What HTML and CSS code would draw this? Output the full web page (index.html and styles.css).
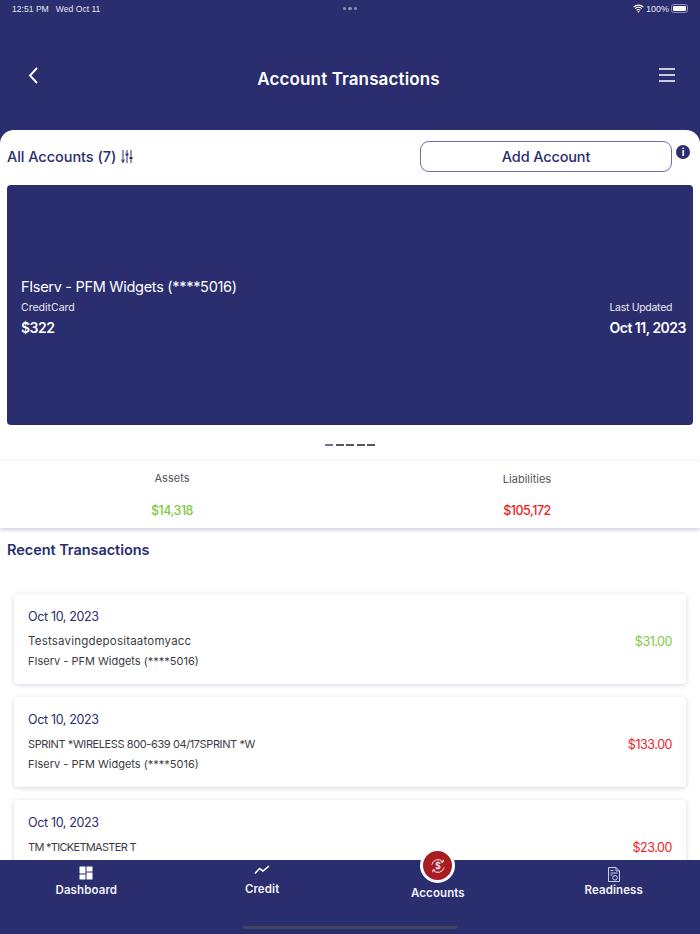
FILE: index.html
```html
<!DOCTYPE html>
<html lang="en">
<head>
<meta charset="utf-8">
<title>Account Transactions</title>
<link rel="stylesheet" href="styles.css">
</head>
<body>
<div class="app">
  <header class="top">
    <div class="status">
      <div class="status-left"><span>12:51 PM</span><span>Wed Oct 11</span></div>
      <div class="dots"><i></i><i></i><i></i></div>
      <div class="status-right">
        <svg class="wifi" width="11" height="9" viewBox="0 0 12 10"><path d="M.6 3.4a7.8 7.8 0 0 1 10.8 0M2.3 5.2a5.4 5.4 0 0 1 7.4 0M4 7a3 3 0 0 1 4 0" fill="none" stroke="#fff" stroke-width="1.3"/><path d="M6 9.7 4.700 8.300a2 2 0 0 1 2.600 0z" fill="#fff"/></svg>
        <span>100%</span>
        <span class="battery"><span class="battery-fill"></span></span>
      </div>
    </div>
    <div class="titlebar">
      <svg class="back" width="12" height="18" viewBox="0 0 12 18"><path d="M10 2 3 9.500 10 17" fill="none" stroke="#fff" stroke-width="1.900"/></svg>
      <h1>Account Transactions</h1>
      <svg class="menu" width="16" height="14" viewBox="0 0 16 14"><path d="M0 1h16M0 7h16M0 13h16" stroke="#fff" stroke-width="1.300"/></svg>
    </div>
  </header>
  <main class="sheet">
    <div class="acct-row">
      <div class="acct-label">All Accounts (7)
        <svg width="12" height="13" viewBox="0 0 12 13" fill="none" stroke="#2a2d6e"><path d="M2 0v12M6 0v13M10 0v13" stroke-width="1"/><path d="M.5 9.500 2 12.500l1.500-3" stroke-width="1"/><path d="M4.500 4.500h3M8.500 8h3" stroke-width="1.800"/></svg>
      </div>
      <div class="add-wrap">
        <button class="add-btn">Add Account</button>
        <span class="info">i</span>
      </div>
    </div>
    <section class="card">
      <div class="card-title">FIserv - PFM Widgets (****5016)</div>
      <div class="card-cols">
        <div><div class="card-small">CreditCard</div><div class="card-val">$322</div></div>
        <div><div class="card-small updated">Last Updated</div><div class="card-val">Oct 11, 2023</div></div>
      </div>
    </section>
    <div class="pager"><i class="on"></i><i></i><i></i><i></i><i></i></div>
    <section class="totals">
      <div class="total"><div class="total-label">Assets</div><div class="total-val green">$14,318</div></div>
      <div class="total"><div class="total-label">Liabilities</div><div class="total-val red">$105,172</div></div>
    </section>
    <h2>Recent Transactions</h2>
    <div class="tx-list">
      <article class="tx">
        <div class="tx-date">Oct 10, 2023</div>
        <div class="tx-line"><span class="name-mixed">Testsavingdepositaatomyacc</span><span class="tx-amt green">$31.00</span></div>
        <div class="tx-sub">FIserv - PFM Widgets (****5016)</div>
      </article>
      <article class="tx">
        <div class="tx-date">Oct 10, 2023</div>
        <div class="tx-line"><span class="name-caps">SPRINT *WIRELESS 800-639 04/17SPRINT *W</span><span class="tx-amt red">$133.00</span></div>
        <div class="tx-sub">FIserv - PFM Widgets (****5016)</div>
      </article>
      <article class="tx">
        <div class="tx-date">Oct 10, 2023</div>
        <div class="tx-line"><span class="name-caps-tight">TM *TICKETMASTER T</span><span class="tx-amt red">$23.00</span></div>
      </article>
    </div>
  </main>
  <nav class="tabs">
    <div class="tab">
      <svg width="14" height="14" viewBox="0 0 14 14" fill="#fff"><path d="M.5.500h6v7h-6zM7.500.500h6v5h-6zM.5 8.500h6v5h-6zM7.500 6.500h6v7h-6z"/></svg>
      <span>Dashboard</span>
    </div>
    <div class="tab tab-credit">
      <svg width="16" height="10" viewBox="0 0 16 10"><path d="M1 8.500 5.500 3.500 9 6 15 1" fill="none" stroke="#fff" stroke-width="1.600"/></svg>
      <span>Credit</span>
    </div>
    <div class="tab tab-active">
      <span class="badge">
        <svg width="18" height="18" viewBox="0 0 20 20" fill="none" stroke="#fff" stroke-width="1"><path d="M3.200 8.500A7 7 0 0 1 15.500 5.500M16.800 11.500A7 7 0 0 1 4.500 14.500"/><path d="m15.800 3-.2 2.800-2.700-.3M4.200 17l.2-2.800 2.700.3"/><text x="10" y="13.200" font-size="9.500" font-weight="600" text-anchor="middle" fill="#fff" stroke="none" font-family="Inter, sans-serif">$</text></svg>
      </span>
      <span>Accounts</span>
    </div>
    <div class="tab tab-ready">
      <svg width="12" height="15" viewBox="0 0 12 15" fill="none" stroke="#cfd0e6" stroke-width="1"><path d="M.5.500h7.500l3.500 3.500v10.500H.5z"/><path d="M8 .5v3.500h3.500M2.500 3.500h3M2.500 6h7M2.500 8h2"/><circle cx="7" cy="10.800" r="2.300"/></svg>
      <span>Readiness</span>
    </div>
    <div class="home-bar"></div>
  </nav>
</div>
</body>
</html>
```
FILE: styles.css
```css
* { box-sizing: border-box; }
html, body { margin: 0; height: 100%; }
body { font-family: "Inter", "Open Sans", sans-serif; color: #3c3c44; background: #fff; }
.app { width: 700px; height: 934px; display: flex; flex-direction: column; overflow: hidden; background: #2a2d6e; }
.top { flex: 0 0 130px; color: #fff; padding: 0 12px 0 12px; }
.status { height: 17px; display: flex; align-items: center; justify-content: space-between; font: 8.600px "Liberation Sans", sans-serif; color: #e6e6f2; position: relative; }
.status-left { display: flex; gap: 7px; }
.status-right { display: flex; align-items: center; gap: 2px; font-size: 9px; }
.dots { position: absolute; left: 50%; top: 7px; margin-left: -7px; display: flex; gap: 2px; }
.dots i { width: 3.300px; height: 3.300px; border-radius: 50%; background: #8e90bb; }
.battery { width: 17px; height: 9px; border-radius: 2.500px; border: 1px solid #8e90bb; padding: 1px; display: block; }
.battery-fill { display: block; width: 100%; height: 100%; background: #fff; border-radius: 1px; }
.titlebar { display: flex; align-items: center; justify-content: space-between; padding: 0 13px 0 15px; height: 50px; margin-top: 33px; }
.titlebar h1 { margin: 0 0 0 -1px; font-size: 17px; font-weight: 600; letter-spacing: .12px; position: relative; top: 4px; }
.sheet { flex: 1; min-height: 0; background: #fff; border-radius: 14px 14px 0 0; overflow: hidden; }
.acct-row { display: flex; align-items: center; justify-content: space-between; padding: 0 10px 0 7px; height: 53px; margin-bottom: 2px; }
.acct-label { display: flex; align-items: center; gap: 5px; font-size: 14.500px; font-weight: 500; color: #2a2d6e; letter-spacing: -.05px; }
.add-wrap { display: flex; align-items: flex-start; gap: 4px; }
.add-btn { width: 252px; height: 31px; border: 1px solid #6d6fa6; border-radius: 9px; background: #fff; color: #2a2d6e; font: 500 14.500px "Inter", sans-serif; letter-spacing: -.15px; }
.info { width: 14px; height: 14px; border-radius: 50%; background: #2a2d6e; color: #fff; font: 700 10px/14px "Inter", sans-serif; text-align: center; margin-top: 4px; }
.card { margin: 0 7px; height: 240px; background: #2a2d6e; border-radius: 4px; color: #fff; padding: 92px 7px 0 14px; }
.card-title { font-size: 14.500px; font-weight: 400; letter-spacing: -.3px; line-height: 20px; }
.card-cols { display: flex; justify-content: space-between; margin-top: 3px; }
.card-small { font-size: 10.500px; line-height: 16px; color: #e8e8f2; }
.updated { letter-spacing: -.3px; }
.card-val { font-size: 14px; font-weight: 600; line-height: 18px; margin-top: 3px; letter-spacing: -.5px; }
.pager { display: flex; justify-content: center; gap: 2.500px; margin-top: 19px; height: 2px; }
.pager i { width: 8px; height: 2px; background: #55555c; }
.pager i.on { background: #6d6fa6; }
.totals { margin-top: 14px; height: 68px; display: grid; grid-template-columns: 1fr 1fr; border-top: 1px solid #f4f4f7; box-shadow: 0 2px 4px rgba(42,45,110,.22); text-align: center; position: relative; }
.total-label { font-size: 11px; color: #55555c; line-height: 16px; margin-top: 9px; }
.total-val { font-size: 12.500px; font-weight: 500; line-height: 18px; margin-top: 16px; letter-spacing: -.5px; }
.total:first-child { padding-right: 6px; }
.total:last-child { padding-left: 4px; }
.total:last-child .total-label { margin-top: 10px; }
.total:last-child .total-val { margin-top: 15px; }
.green { color: #80c942; }
.red { color: #ee1c25; }
h2 { margin: 12px 7px 0; font-size: 14.500px; font-weight: 600; line-height: 20px; color: #2a2d6e; letter-spacing: -.05px; }
.tx-list { padding: 34px 14px 0; display: flex; flex-direction: column; gap: 13px; }
.tx { flex: 0 0 90px; height: 90px; padding: 14px 14px 0; border-radius: 4px; background: #fff; box-shadow: 0 1px 5px rgba(42,45,110,.2); font-size: 11px; color: #3c3c44; }
.tx-date { font-size: 12.500px; color: #2a2d6e; line-height: 18px; letter-spacing: -.35px; }
.tx-line { display: flex; justify-content: space-between; align-items: flex-start; margin-top: 6px; line-height: 18px; }
.name-mixed { font-size: 11.500px; letter-spacing: .2px; }
.name-caps { letter-spacing: -.4px; }
.name-caps-tight { letter-spacing: -.7px; }
.tx-amt { font-size: 12.500px; letter-spacing: -.45px; padding-top: 1px; }
.tx-sub { margin-top: 1px; line-height: 18px; }
.tabs { flex: 0 0 74px; position: relative; z-index: 1; display: grid; grid-template-columns: repeat(4, 175.800px); justify-content: center; background: #2a2d6e; color: #f2f2f8; font-size: 11.500px; font-weight: 600; letter-spacing: .1px; }
.tab { display: flex; flex-direction: column; align-items: center; padding-top: 6px; gap: 3px; }
.tab-credit { padding-top: 5px; gap: 7px; }
.tab-ready { padding-top: 7px; gap: 1px; }
.tab-active { position: relative; padding-top: 26px; }
.badge { position: absolute; top: -12px; left: 50%; margin-left: -17.500px; width: 35px; height: 35px; border-radius: 50%; background: #a81c22; border: 3px solid #fff; display: flex; align-items: center; justify-content: center; }
.home-bar { position: absolute; left: 243px; bottom: 5px; width: 214px; height: 3px; border-radius: 2px; background: #44445f; }
```
